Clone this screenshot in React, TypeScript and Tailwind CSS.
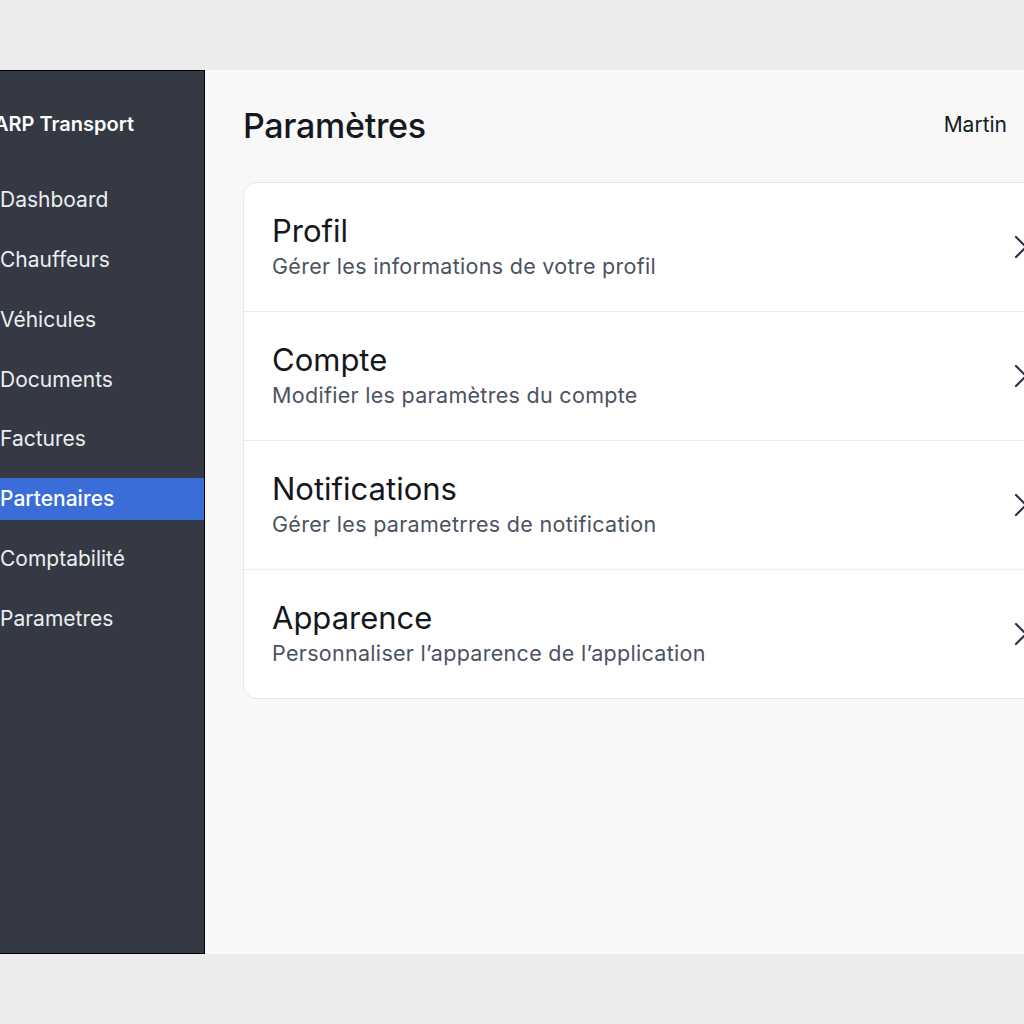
import React from 'react';

const navItems = [
  'Dashboard',
  'Chauffeurs',
  'Véhicules',
  'Documents',
  'Factures',
  'Partenaires',
  'Comptabilité',
  'Parametres',
];

const settings = [
  { title: 'Profil', subtitle: 'Gérer les informations de votre profil' },
  { title: 'Compte', subtitle: 'Modifier les paramètres du compte' },
  { title: 'Notifications', subtitle: 'Gérer les parametrres de notification' },
  { title: 'Apparence', subtitle: 'Personnaliser l’apparence de l’application' },
];

const Chevron: React.FC = () => (
  <svg width="14" height="24" viewBox="0 0 14 24" fill="none" className="shrink-0">
    <path d="M2 2 L12 12 L2 22" stroke="#2b3240" strokeWidth="2.2" strokeLinecap="round" strokeLinejoin="round" />
  </svg>
);

const Sidebar: React.FC = () => (
  <aside className="w-[205px] shrink-0 bg-[#343944] border-t border-r border-b border-black flex flex-col pt-[39px]">
    <div className="-ml-[6px] h-[28px] leading-[28px] text-[20px] font-semibold text-white whitespace-nowrap">ARP Transport</div>
    <nav className="mt-[41px] flex flex-col gap-[17.75px]">
      {navItems.map((item) => {
        const active = item === 'Partenaires';
        return (
          <div
            key={item}
            className={
              active
                ? 'h-[42px] flex items-center bg-[#3b6dd8] text-white font-medium text-[21px]'
                : 'h-[42px] flex items-center text-[#eceef1] text-[21px]'
            }
          >
            <span>{item}</span>
          </div>
        );
      })}
    </nav>
  </aside>
);

const App: React.FC = () => {
  return (
    <div className="w-[1024px] h-[1024px] bg-[#ececec] pt-[70px] overflow-hidden" style={{ fontFamily: 'Inter, "Noto Sans", sans-serif' }}>
      <div className="flex h-[884px]">
        <Sidebar />
        <main className="flex-1 bg-[#f8f8f8] overflow-hidden pl-[38px] pt-[35px]">
          <div className="flex items-center justify-between h-[40px] pr-[17px]">
            <h1 className="text-[34px] font-medium text-[#15181d] tracking-[-0.3px]">Paramètres</h1>
            <span className="text-[21px] text-[#15181d]">Martin</span>
          </div>
          <div className="mt-[37px] w-[820px] bg-white border border-[#e7e7e7] rounded-[14px] flex flex-col">
            {settings.map((s, i) => (
              <div
                key={s.title}
                className={
                  i < settings.length - 1
                    ? 'h-[129px] flex items-center border-b border-[#ececec] pl-[28px] pr-[34px]'
                    : 'h-[128px] flex items-center pl-[28px] pr-[34px]'
                }
              >
                <div className="flex-1 flex flex-col">
                  <div className="text-[31px] leading-[36px] text-[#14171c] -mt-[2px]">{s.title}</div>
                  <div className="mt-[3px] text-[21.5px] leading-[28px] text-[#4b5262] tracking-[0.3px]">{s.subtitle}</div>
                </div>
                <Chevron />
              </div>
            ))}
          </div>
        </main>
      </div>
    </div>
  );
};

export default App;
